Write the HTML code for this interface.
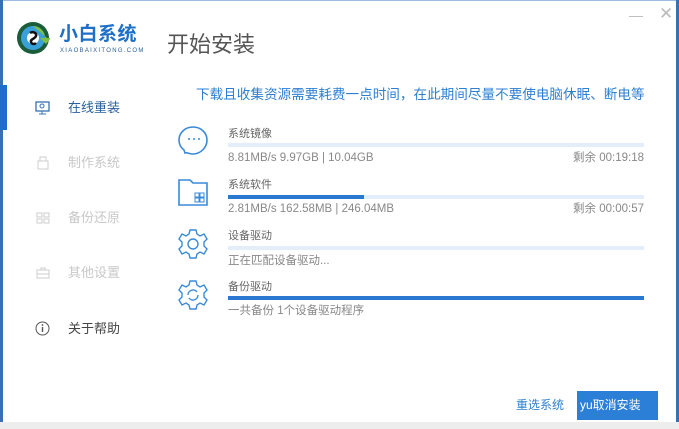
<!DOCTYPE html>
<html><head><meta charset="utf-8"><style>
body{margin:0;width:679px;height:429px;overflow:hidden;background:#fff;font-family:"Liberation Sans","Noto Sans CJK SC",sans-serif;position:relative}
.a{position:absolute;white-space:nowrap;line-height:1.2}
.bar{position:absolute;left:228px;width:416px;height:4px;background:#e4eefa}
.fill{height:100%;background:#2a78d2}
.lbl{font-size:11px;color:#666}
.st{font-size:11.5px;color:#888;line-height:14px}
.nav{font-size:13px}
</style></head><body>
<div class="a" style="left:0;top:0;width:679px;height:1px;background:#9bbbe0"></div>
<div class="a" style="left:0;top:0;width:3px;height:425px;background:#3a6fb0"></div>
<div class="a" style="right:0;top:0;width:3px;height:425px;background:#3a6fb0"></div>
<div class="a" style="left:0;top:422px;width:679px;height:7px;background:#ededed"></div>
<div class="a" style="left:0;top:85px;width:7px;height:45px;background:#1f6ec9"></div>
<svg class="a" style="left:16px;top:21px" width="34" height="34" viewBox="0 0 34 34"><circle cx="17" cy="17" r="16" fill="#1b5d3a"/><circle cx="17" cy="17" r="12" fill="#3aa0d8"/><path d="M17 5a12 12 0 0 1 12 12h-5l6 6 5-6h-4" fill="#7cc04a"/><circle cx="17" cy="17" r="6" fill="#fff"/><path d="M14 12c3-2 7 0 6 3s-6 3-5 6 4 2 5 1" stroke="#111" stroke-width="2.5" fill="none"/></svg>
<div class="a" style="left:59px;top:24px;font-size:19px;font-weight:bold;color:#1e6fc8;letter-spacing:0.5px">小白系统</div>
<div class="a" style="left:60px;top:48px;font-size:6px;color:#2a5f9a;letter-spacing:1.3px">XIAOBAIXITONG.COM</div>
<div class="a" style="left:167px;top:32px;font-size:22px;color:#555">开始安装</div>
<div class="a" style="left:629px;top:7px;font-size:14px;color:#bbb">—</div>
<div class="a" style="left:659px;top:4px;font-size:17px;color:#bbb">✕</div>
<div class="a" style="left:196px;top:87px;font-size:13.6px;color:#2f7fd0">下载且收集资源需要耗费一点时间，在此期间尽量不要使电脑休眠、断电等</div>
<svg class="a" style="left:35px;top:101px" width="16" height="14"><rect x="1" y="1" width="13" height="9" fill="none" stroke="#3a6fb0" stroke-width="1.3"/><path d="M7 10v3M4 13h7" stroke="#3a6fb0"/><circle cx="7" cy="5" r="2" fill="none" stroke="#3a6fb0"/></svg>
<div class="a nav" style="left:68px;top:100px;color:#2a5f9a">在线重装</div>
<svg class="a" style="left:37px;top:156px" width="12" height="14"><path d="M3 1h6v4H3zM1 5h10v8H1z" fill="none" stroke="#ccc"/></svg>
<div class="a nav" style="left:68px;top:155px;color:#c8c8c8">制作系统</div>
<svg class="a" style="left:36px;top:212px" width="14" height="12"><rect x="1" y="1" width="5" height="4" fill="none" stroke="#ccc"/><rect x="8" y="1" width="5" height="4" fill="none" stroke="#ccc"/><rect x="1" y="7" width="5" height="4" fill="none" stroke="#ccc"/><rect x="8" y="7" width="5" height="4" fill="none" stroke="#ccc"/></svg>
<div class="a nav" style="left:68px;top:210px;color:#c8c8c8">备份还原</div>
<svg class="a" style="left:36px;top:267px" width="14" height="12"><path d="M5 3V1h4v2M1 3h12v8H1zM1 7h12" fill="none" stroke="#ccc"/></svg>
<div class="a nav" style="left:68px;top:265px;color:#c8c8c8">其他设置</div>
<svg class="a" style="left:35px;top:321px" width="15" height="15"><circle cx="7.5" cy="7.5" r="6.5" fill="none" stroke="#555"/><path d="M7.5 6v5" stroke="#555" stroke-width="1.4"/><circle cx="7.5" cy="4" r="0.9" fill="#555"/></svg>
<div class="a nav" style="left:68px;top:321px;color:#444">关于帮助</div>

<svg class="a" style="left:177px;top:124px" width="34" height="34"><path d="M16 3c8 0 14 6 14 13s-6 14-14 14c-4 0-6-2-8-1l-1-3C3 23 2 19 2 16 2 9 8 3 16 3z" fill="none" stroke="#3a8ad8" stroke-width="1.6"/><circle cx="12" cy="15" r="1" fill="#3a8ad8"/><circle cx="17" cy="15" r="1" fill="#3a8ad8"/><circle cx="22" cy="15" r="1" fill="#3a8ad8"/></svg>
<div class="a lbl" style="left:228px;top:128px">系统镜像</div>
<div class="bar" style="top:143px"></div>
<div class="a st" style="left:228px;top:151px">8.81MB/s 9.97GB | 10.04GB</div>
<div class="a st" style="right:35px;top:151px">剩余 00:19:18</div>

<svg class="a" style="left:177px;top:177px" width="34" height="30"><path d="M2 3h11l3 3h14v22H2z" fill="none" stroke="#3a8ad8" stroke-width="1.6"/><rect x="18" y="16" width="4" height="4" fill="none" stroke="#3a8ad8"/><rect x="23" y="16" width="4" height="4" fill="none" stroke="#3a8ad8"/><rect x="18" y="21" width="4" height="4" fill="none" stroke="#3a8ad8"/><rect x="23" y="21" width="4" height="4" fill="none" stroke="#3a8ad8"/></svg>
<div class="a lbl" style="left:228px;top:179px">系统软件</div>
<div class="bar" style="top:195px"><div class="fill" style="width:136px"></div></div>
<div class="a st" style="left:228px;top:202px">2.81MB/s 162.58MB | 246.04MB</div>
<div class="a st" style="right:35px;top:202px">剩余 00:00:57</div>

<svg class="a" style="left:177px;top:228px" width="32" height="32" viewBox="0 0 32 32"><path d="M13 2h6l1 4 3 2 4-2 3 5-3 3v4l3 3-3 5-4-2-3 2-1 4h-6l-1-4-3-2-4 2-3-5 3-3v-4L2 11l3-5 4 2 3-2z" fill="none" stroke="#3a8ad8" stroke-width="1.4"/><circle cx="16" cy="16" r="5" fill="none" stroke="#3a8ad8" stroke-width="1.4"/></svg>
<div class="a lbl" style="left:228px;top:230px">设备驱动</div>
<div class="bar" style="top:246px"></div>
<div class="a st" style="left:228px;top:254px">正在匹配设备驱动...</div>

<svg class="a" style="left:177px;top:279px" width="32" height="32" viewBox="0 0 32 32"><path d="M13 2h6l1 4 3 2 4-2 3 5-3 3v4l3 3-3 5-4-2-3 2-1 4h-6l-1-4-3-2-4 2-3-5 3-3v-4L2 11l3-5 4 2 3-2z" fill="none" stroke="#3a8ad8" stroke-width="1.4"/><path d="M11 16a5 5 0 0 1 9-3M21 16a5 5 0 0 1-9 3" fill="none" stroke="#3a8ad8" stroke-width="1.4"/></svg>
<div class="a lbl" style="left:228px;top:281px">备份驱动</div>
<div class="bar" style="top:296px"><div class="fill" style="width:416px"></div></div>
<div class="a st" style="left:228px;top:304px">一共备份 1个设备驱动程序</div>

<div class="a" style="left:516px;top:398px;font-size:12px;color:#2f7fd0">重选系统</div>
<div class="a" style="left:577px;top:391px;width:81px;height:29px;background:#2b7fd6"></div>
<div class="a" style="left:580px;top:398px;font-size:12px;color:#fff">yu取消安装</div>
</body></html>
